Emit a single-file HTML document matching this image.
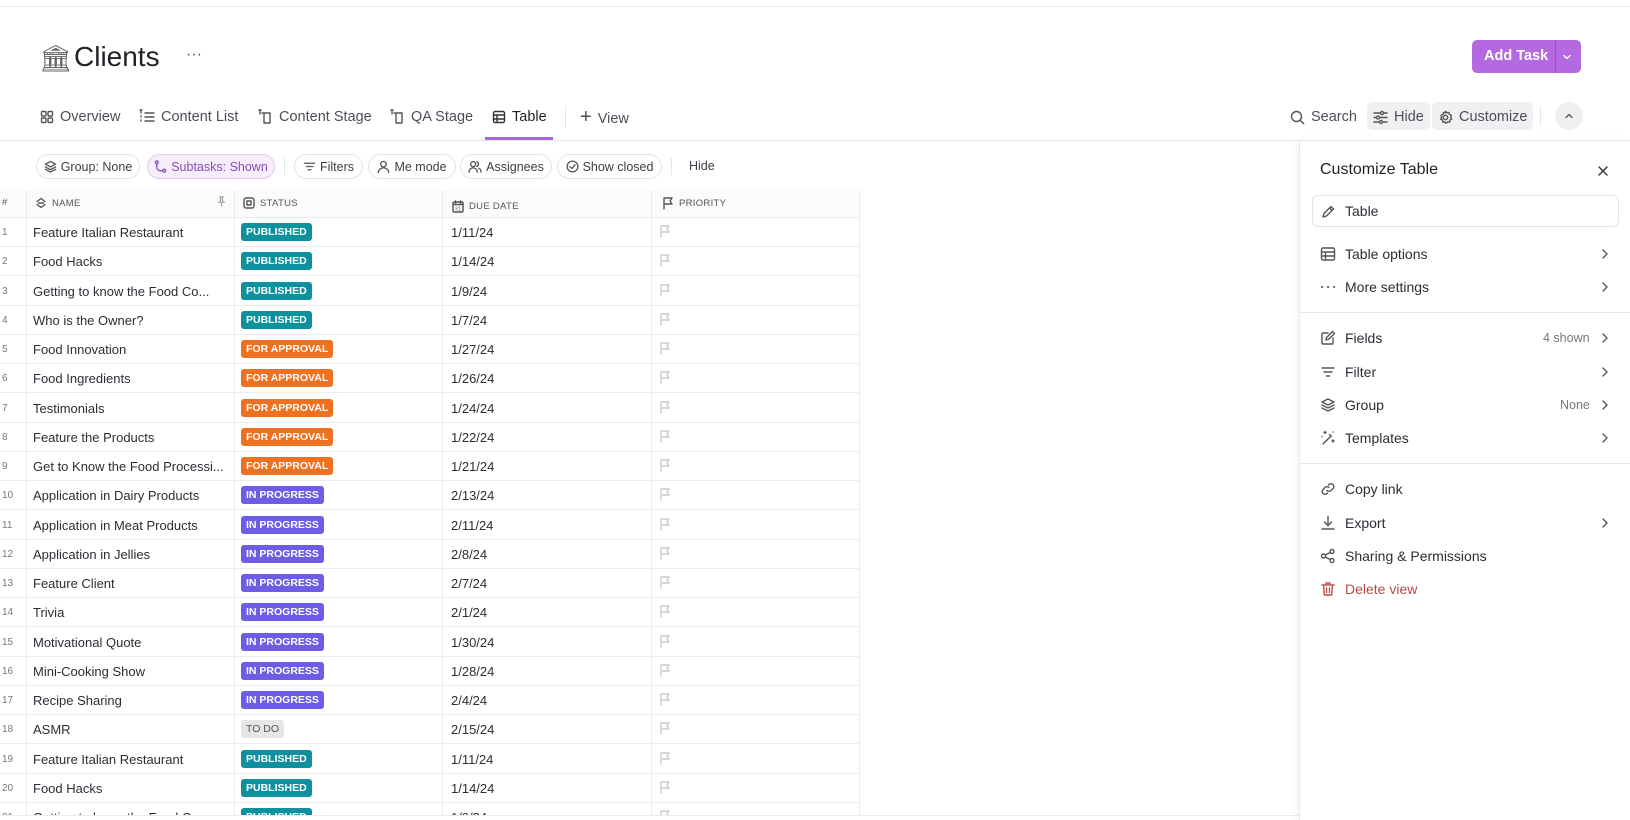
<!DOCTYPE html>
<html><head><meta charset="utf-8"><style>
*{box-sizing:border-box;margin:0;padding:0}
html,body{width:1630px;height:820px;overflow:hidden}
body{background:#fff;font-family:"Liberation Sans",sans-serif;color:#2a2e34;position:relative}
.a{position:absolute;white-space:nowrap}
svg{fill:none;stroke:#555;stroke-width:1.4;stroke-linecap:round;stroke-linejoin:round}
.tab{position:absolute;top:109px;font-size:14.5px;color:#4a4f57;display:flex;align-items:center;gap:6px}
.chip{position:absolute;top:154px;height:25px;border:1px solid #e4e4e7;border-radius:13px;font-size:12.5px;color:#3d4047;display:flex;align-items:center;justify-content:center;gap:4px}
.hl{position:absolute;left:0;width:859px;height:1px;background:#ececef}
.vl{position:absolute;top:190px;width:1px;height:625px;background:#ececef}
.row{position:absolute;left:0;width:859px;height:29px;font-size:13px}
.row span{position:absolute;top:8px}
.n{left:2px;font-size:10px;color:#777;top:10px!important}
.b{position:absolute;left:241px;top:6px;height:18px;line-height:18px;padding:0 5px;border-radius:3px;color:#fff;font-size:10.5px;font-weight:bold}
.P{background:#0e919e}.F{background:#ee7121}.I{background:#6c5ce6}.T{background:#e6e6e6;color:#555;font-weight:normal}
.pi{position:absolute;left:1320px;width:16px;height:16px}
.pt{position:absolute;left:1345px;font-size:14px;color:#2a2e34}
.ch{position:absolute;left:1600px;width:10px;height:12px}
.hd{position:absolute;top:197px;font-size:9.5px;color:#555;letter-spacing:.3px;display:flex;align-items:center;gap:5px}
</style></head><body>
<div class="hl" style="top:6px;width:1630px;background:#ebebeb"></div>
<div class="a" style="left:39px;top:43px;font-size:26px;color:#666">🏛</div>
<div class="a" style="left:74px;top:41px;font-size:28px;color:#1f2227">Clients</div>
<div class="a" style="left:186px;top:46px;font-size:16px;color:#555">···</div>
<div class="a" style="left:1472px;top:40px;width:109px;height:33px;background:#b569e0;border-radius:5px;color:#fff;font-weight:bold;font-size:14.5px;line-height:33px;padding-left:12px">Add Task<div style="position:absolute;left:83px;top:0;width:1px;height:33px;background:#9a4fc6"></div><svg style="position:absolute;left:90px;top:12px;stroke:#fff" width="10" height="10" viewBox="0 0 10 10"><path d="M2 3.5l3 3 3-3"/></svg></div>

<div class="tab" style="left:40px"><svg width="14" height="14" viewBox="0 0 14 14"><rect x="1.5" y="1.5" width="4.5" height="4.5" rx="1"/><rect x="8" y="1.5" width="4.5" height="4.5" rx="1"/><rect x="1.5" y="8" width="4.5" height="4.5" rx="1"/><rect x="8" y="8" width="4.5" height="4.5" rx="1"/></svg>Overview</div>
<div class="tab" style="left:139px"><svg width="16" height="16" viewBox="0 0 16 16"><path d="M2 1v3M1 1h2M2 7v1M2 11v1M6 4h9M6 8h9M6 12h9"/></svg>Content List</div>
<div class="tab" style="left:257px"><svg width="16" height="16" viewBox="0 0 16 16"><path d="M3 1v4M2 1h2M5 4h8v10H7V4M7 4v10"/></svg>Content Stage</div>
<div class="tab" style="left:389px"><svg width="16" height="16" viewBox="0 0 16 16"><path d="M3 1v4M2 1h2M5 4h8v10H7V4M7 4v10"/></svg>QA Stage</div>
<div class="tab" style="left:492px;color:#1f2227"><svg width="14" height="14" viewBox="0 0 14 14" style="stroke:#333"><rect x="1.5" y="1.5" width="11" height="11" rx="1.5"/><path d="M1.5 5h11M1.5 9h11M5 5v7.5"/></svg>Table</div>
<div class="a" style="left:485px;top:137px;width:68px;height:3px;background:#a86ad0"></div>
<div class="a" style="left:565px;top:106px;width:1px;height:22px;background:#e6e6e6"></div>
<div class="tab" style="left:580px"><span style="font-size:20px;font-weight:300;margin-top:-3px">+</span>View</div>

<div class="tab" style="left:1290px"><svg width="15" height="15" viewBox="0 0 15 15"><circle cx="6.5" cy="6.5" r="5"/><path d="M10.2 10.2l3.5 3.5"/></svg>Search</div>
<div class="a" style="left:1367px;top:102px;width:63px;height:28px;background:#f0f0f2;border-radius:5px"></div>
<div class="tab" style="left:1373px"><svg width="15" height="15" viewBox="0 0 15 15"><path d="M1 3h13M1 7.5h13M1 12h13"/><circle cx="9" cy="3" r="1.5" fill="#fff"/><circle cx="5" cy="7.5" r="1.5" fill="#fff"/><circle cx="8" cy="12" r="1.5" fill="#fff"/></svg>Hide</div>
<div class="a" style="left:1432px;top:102px;width:101px;height:28px;background:#f0f0f2;border-radius:5px"></div>
<div class="tab" style="left:1438px"><svg width="15" height="15" viewBox="0 0 15 15"><circle cx="7.5" cy="7.5" r="2.2"/><path d="M7.5 1.2l1.3 1.6 2-.4.6 2 1.9.9-.6 1.9 1 1.8-1.8 1-.2 2-2-.1-1.5 1.4-1.5-1.4-2 .1-.2-2-1.8-1 1-1.8-.6-1.9 1.9-.9.6-2 2 .4z"/></svg>Customize</div>
<div class="a" style="left:1540px;top:106px;width:1px;height:20px;background:#e6e6e6"></div>
<div class="a" style="left:1555px;top:102px;width:28px;height:28px;border-radius:14px;background:#f0f0f2"><svg style="position:absolute;left:9px;top:9px" width="10" height="10" viewBox="0 0 10 10"><path d="M2 6.5l3-3 3 3"/></svg></div>
<div class="hl" style="top:140px;width:1630px;background:#e6e6ea"></div>

<div class="chip" style="left:36px;width:104px"><svg width="13" height="13" viewBox="0 0 14 14"><path d="M7 1.5l5.5 3-5.5 3-5.5-3z M1.5 7.5l5.5 3 5.5-3M1.5 10l5.5 3 5.5-3"/></svg>Group: None</div>
<div class="chip" style="left:147px;width:128px;background:#f7eefc;border-color:#e3c9f3;color:#8a4cb8"><svg width="13" height="13" viewBox="0 0 14 14" style="stroke:#8a4cb8"><circle cx="3" cy="2.5" r="1.5"/><circle cx="11" cy="11.5" r="1.5"/><path d="M3 4v4a3.5 3.5 0 0 0 3.5 3.5H9.5"/></svg>Subtasks: Shown</div>
<div class="a" style="left:284px;top:158px;width:1px;height:17px;background:#e6e6e6"></div>
<div class="chip" style="left:294px;width:69px"><svg width="13" height="13" viewBox="0 0 14 14"><path d="M1.5 3.5h11M3.5 7h7M5.5 10.5h3"/></svg>Filters</div>
<div class="chip" style="left:368px;width:88px"><svg width="13" height="13" viewBox="0 0 14 14"><circle cx="7" cy="4.5" r="3"/><path d="M1.5 13.5c0-3 2.5-5 5.5-5s5.5 2 5.5 5"/></svg>Me mode</div>
<div class="chip" style="left:460px;width:92px"><svg width="14" height="13" viewBox="0 0 15 14"><circle cx="5.5" cy="4.5" r="2.7"/><path d="M1 13c0-2.8 2-4.5 4.5-4.5S10 10.2 10 13M9.5 2a2.7 2.7 0 0 1 0 5M11.5 8.8c1.5.6 2.5 2 2.5 4.2"/></svg>Assignees</div>
<div class="chip" style="left:557px;width:105px"><svg width="13" height="13" viewBox="0 0 14 14"><circle cx="7" cy="7" r="5.8"/><path d="M4.3 7.2l2 2 3.5-4"/></svg>Show closed</div>
<div class="a" style="left:671px;top:158px;width:1px;height:17px;background:#e6e6e6"></div>
<div class="a" style="left:689px;top:159px;font-size:12.5px;color:#3d4047">Hide</div>

<div class="a" style="left:0;top:190px;width:859px;height:27px;background:#fbfbfd"></div>
<div class="hd" style="left:2px">#</div>
<div class="hd" style="left:35px"><svg width="12" height="12" viewBox="0 0 12 12"><path d="M2 4.5L6 1.5l4 3M2 7.5l4 3 4-3M3.5 6h5"/></svg>NAME</div>
<svg class="a" style="left:216px;top:196px;stroke:#aaa" width="11" height="11" viewBox="0 0 12 12"><path d="M4 1h4M5 1v4L3 7h6L7 5V1M6 7v4"/></svg>
<div class="hd" style="left:243px"><svg width="12" height="12" viewBox="0 0 12 12"><rect x="1" y="1" width="10" height="10" rx="2"/><rect x="4" y="4" width="4" height="4"/></svg>STATUS</div>
<div class="hd" style="left:452px;top:200px"><svg width="12" height="13" viewBox="0 0 12 13"><rect x="1" y="2" width="10" height="10" rx="1"/><path d="M1 4.5h10M3.5 1v2M8.5 1v2"/><text x="3" y="10.5" font-size="5" fill="#555" stroke="none">31</text></svg>DUE DATE</div>
<div class="hd" style="left:662px"><svg width="12" height="13" viewBox="0 0 12 13"><path d="M2 12V1h8l-2 3 2 3H2"/></svg>PRIORITY</div>
<div class="vl" style="left:26px"></div><div class="vl" style="left:234px"></div><div class="vl" style="left:442px"></div><div class="vl" style="left:651px"></div><div class="vl" style="left:859px"></div>
<div class="hl" style="top:217px"></div>

<div class="a" style="left:0;top:217px;width:860px;height:598px;overflow:hidden"><div id="rows" style="position:absolute;left:0;top:-217px;width:860px;height:815px"></div></div>
<div class="hl" style="top:815px;width:1299px"></div>

<div class="a" style="left:1299px;top:141px;width:331px;height:679px;background:#fff;border-left:1px solid #e8e8ec;box-shadow:-4px 0 10px rgba(0,0,0,.04)"></div>
<div class="a" style="left:1320px;top:161px;font-size:16px;color:#1f2227">Customize Table</div>
<svg class="a" style="left:1597px;top:165px" width="12" height="12" viewBox="0 0 12 12"><path d="M2 2l8 8M10 2l-8 8" style="stroke:#333"/></svg>
<div class="a" style="left:1312px;top:195px;width:307px;height:32px;border:1px solid #e4e4e7;border-radius:6px"></div>
<svg class="pi" style="top:204px" viewBox="0 0 16 16"><path d="M3 13l1-3.5 7-7 2.5 2.5-7 7z M9.5 4l2.5 2.5"/></svg>
<div class="pt" style="top:203px">Table</div>
<svg class="pi" style="top:246px" viewBox="0 0 16 16"><rect x="1.5" y="2" width="13" height="12" rx="1.5"/><path d="M1.5 6h13M1.5 10h13M5.5 6v8"/></svg><div class="pt" style="top:246px">Table options</div>
<svg class="pi" style="top:279px" viewBox="0 0 16 16"><path d="M2 8h.2M8 8h.2M14 8h.2" style="stroke-width:2"/></svg><div class="pt" style="top:279px">More settings</div>
<div class="a" style="left:1300px;top:312px;width:330px;height:1px;background:#e8e8ec"></div>
<svg class="pi" style="top:330px" viewBox="0 0 16 16"><path d="M13 8v5a1 1 0 0 1-1 1H3a1 1 0 0 1-1-1V4a1 1 0 0 1 1-1h5"/><path d="M6 10l.5-2.5 6-6 2 2-6 6z"/></svg><div class="pt" style="top:330px">Fields</div>
<div class="a" style="left:1543px;top:331px;font-size:12.5px;color:#777">4 shown</div>
<svg class="pi" style="top:364px" viewBox="0 0 16 16"><path d="M2 4h12M4 8h8M6.5 12h3"/></svg><div class="pt" style="top:364px">Filter</div>
<svg class="pi" style="top:397px" viewBox="0 0 16 16"><path d="M8 2l6 3-6 3-6-3z M2 8l6 3 6-3M2 11l6 3 6-3"/></svg><div class="pt" style="top:397px">Group</div>
<div class="a" style="left:1560px;top:398px;font-size:12.5px;color:#777">None</div>
<svg class="pi" style="top:430px" viewBox="0 0 16 16"><path d="M3 14l8-8M9.5 4.5l2 2M5 1.5v2M4 2.5h2M13 10v2M12 11h2M2 6.5h.1M13 2h.1"/></svg><div class="pt" style="top:430px">Templates</div>
<div class="a" style="left:1300px;top:463px;width:330px;height:1px;background:#e8e8ec"></div>
<svg class="pi" style="top:481px" viewBox="0 0 16 16"><path d="M7 9.5a3 3 0 0 0 4 0l2.5-2.5a3 3 0 0 0-4-4L8.5 4M9 6.5a3 3 0 0 0-4 0L2.5 9a3 3 0 0 0 4 4l1-1"/></svg><div class="pt" style="top:481px">Copy link</div>
<svg class="pi" style="top:515px" viewBox="0 0 16 16"><path d="M8 1.5v9M4.5 7l3.5 3.5L11.5 7M2 14h12"/></svg><div class="pt" style="top:515px">Export</div>
<svg class="pi" style="top:548px" viewBox="0 0 16 16"><circle cx="3.5" cy="8" r="2"/><circle cx="12" cy="3.5" r="2"/><circle cx="12" cy="12.5" r="2"/><path d="M5.3 7l5-2.5M5.3 9l5 2.5"/></svg><div class="pt" style="top:548px">Sharing &amp; Permissions</div>
<svg class="pi" style="top:581px;stroke:#c0504d" viewBox="0 0 16 16"><path d="M2 4h12M6 4V2h4v2M3.5 4l.8 10h7.4l.8-10M6.5 7v4.5M9.5 7v4.5"/></svg><div class="pt" style="top:581px;color:#b84a46">Delete view</div>
<svg class="ch" style="top:248px" viewBox="0 0 10 12"><path d="M3 2l4 4-4 4"/></svg>
<svg class="ch" style="top:281px" viewBox="0 0 10 12"><path d="M3 2l4 4-4 4"/></svg>
<svg class="ch" style="top:332px" viewBox="0 0 10 12"><path d="M3 2l4 4-4 4"/></svg>
<svg class="ch" style="top:366px" viewBox="0 0 10 12"><path d="M3 2l4 4-4 4"/></svg>
<svg class="ch" style="top:399px" viewBox="0 0 10 12"><path d="M3 2l4 4-4 4"/></svg>
<svg class="ch" style="top:432px" viewBox="0 0 10 12"><path d="M3 2l4 4-4 4"/></svg>
<svg class="ch" style="top:517px" viewBox="0 0 10 12"><path d="M3 2l4 4-4 4"/></svg>

<script>
var d=[["Feature Italian Restaurant","P","1/11/24"],["Food Hacks","P","1/14/24"],["Getting to know the Food Co...","P","1/9/24"],["Who is the Owner?","P","1/7/24"],["Food Innovation","F","1/27/24"],["Food Ingredients","F","1/26/24"],["Testimonials","F","1/24/24"],["Feature the Products","F","1/22/24"],["Get to Know the Food Processi...","F","1/21/24"],["Application in Dairy Products","I","2/13/24"],["Application in Meat Products","I","2/11/24"],["Application in Jellies","I","2/8/24"],["Feature Client","I","2/7/24"],["Trivia","I","2/1/24"],["Motivational Quote","I","1/30/24"],["Mini-Cooking Show","I","1/28/24"],["Recipe Sharing","I","2/4/24"],["ASMR","T","2/15/24"],["Feature Italian Restaurant","P","1/11/24"],["Food Hacks","P","1/14/24"],["Getting to know the Food Co...","P","1/9/24"]];
var L={P:"PUBLISHED",F:"FOR APPROVAL",I:"IN PROGRESS",T:"TO DO"};
var h="";
d.forEach(function(r,i){var t=217+i*29.25;
h+='<div class="row" style="top:'+t+'px"><span class="n">'+(i+1)+'</span><span style="left:33px">'+r[0]+'</span><div class="b '+r[1]+'">'+L[r[1]]+'</div><span style="left:451px">'+r[2]+'</span><svg style="position:absolute;left:659px;top:8px;stroke:#ccc" width="12" height="13" viewBox="0 0 12 13"><path d="M2 12V1h8l-2 3 2 3H2"/></svg></div><div class="hl" style="top:'+(t+29)+'px"></div>';});
document.getElementById("rows").innerHTML=h;
</script>
</body></html>
